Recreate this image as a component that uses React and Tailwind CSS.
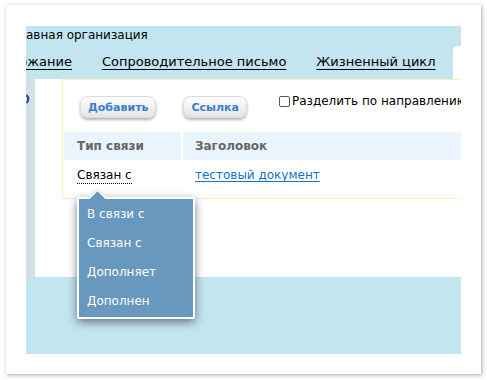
import React from "react";

const tabs = ["Содержание", "Сопроводительное письмо", "Жизненный цикл"];
const linkTypes = ["В связи с", "Связан с", "Дополняет", "Дополнен"];

function Btn({ children }) {
  return (
    <button className="h-[22px] px-[7px] rounded-[8px] bg-gradient-to-b from-white to-[#e4e4e4] border border-[#dcdcdc] shadow-[0_2px_3px_rgba(0,0,0,0.3)] text-[11px] font-bold text-[#3c7ed0] leading-none">
      {children}
    </button>
  );
}

export default function App() {
  return (
    <div className="w-[487px] h-[380px] bg-white pt-[5px] px-[6px] font-['DejaVu_Sans',sans-serif] text-[12px] text-black">
      <div className="h-[369px] bg-white shadow-[1px_1px_4px_rgba(0,0,0,0.35)] p-[20px] pt-[21px]">
        <div className="relative h-[328px] bg-[#c2e5ef] flex flex-col overflow-hidden">
          {/* header */}
          <div className="h-[53px] flex flex-col">
            <div className="h-[17px] pt-[1px] leading-[16px] whitespace-nowrap">авная организация</div>
            <div className="flex items-end h-[36px] whitespace-nowrap">
              <div className="flex flex-1 gap-[30px] pb-[9px] leading-[16px] overflow-hidden text-[13px]">
                {tabs.map((t, i) => (
                  <a key={t} className={"underline underline-offset-[3px] shrink-0 " + (i === 0 ? "ml-[-41px]" : "")}>
                    {t}
                  </a>
                ))}
              </div>
              <div className="w-[8px] h-[33px] bg-white rounded-tl-[5px] shrink-0" />
            </div>
          </div>

          {/* body */}
          <div className="h-[198px] flex">
            <div className="w-[9px] shrink-0 bg-[#d3e0e8] relative">
              <svg className="absolute left-0 top-[15px]" width="5" height="10" viewBox="0 0 5 10">
                <path d="M0.5 1 Q4 5 0.5 9" stroke="#1f4e9a" strokeWidth="2.2" fill="none" />
              </svg>
            </div>
            <div className="flex-1 min-w-0 bg-white pl-[27px] relative overflow-hidden">
              <div className="h-[120px] border-l border-t border-b border-[#fbeec0] pl-[1px] w-[420px]">
                <div className="flex items-center h-[52px] pt-[2px] pl-[16px]">
                  <Btn>Добавить</Btn>
                  <div className="ml-[27px]">
                    <Btn>Ссылка</Btn>
                  </div>
                  <label className="ml-[32px] -mt-[12px] flex items-center gap-[2px] whitespace-nowrap">
                    <span className="w-[11px] h-[11px] border border-[#555] rounded-[2px] bg-white" />
                    Разделить по направлению
                  </label>
                </div>
                <div className="flex h-[28px] bg-[#eaf4fc] font-bold text-[#666]">
                  <div className="w-[117px] pl-[13px] flex items-center">Тип связи</div>
                  <div className="w-[2px] bg-white" />
                  <div className="flex-1 pl-[12px] flex items-center">Заголовок</div>
                </div>
                <div className="flex h-[30px] items-center">
                  <div className="w-[119px] pl-[13px]">
                    <span className="border-b border-dotted border-black pb-[1px]">Связан с</span>
                  </div>
                  <div className="pl-[12px]">
                    <a className="text-[#1574c4] underline underline-offset-[2px]">тестовый документ</a>
                  </div>
                </div>
              </div>
            </div>
          </div>

          <div className="flex-1" />

          {/* dropdown */}
          <div className="absolute left-[51px] top-[171px] w-[118px] h-[122px] bg-[#6898bd] border-2 border-white rounded-[2px] shadow-[0_3px_10px_rgba(0,0,0,0.5)] z-10">
            <div className="absolute left-[12px] top-[-8px] w-[13px] h-[13px] rotate-45 bg-[#6898bd] border-l-2 border-t-2 border-white" />
            <div className="relative flex flex-col text-white">
              {linkTypes.map((t) => (
                <div key={t} className="h-[29px] pl-[8px] flex items-center whitespace-nowrap">
                  {t}
                </div>
              ))}
            </div>
          </div>
        </div>
      </div>
    </div>
  );
}
